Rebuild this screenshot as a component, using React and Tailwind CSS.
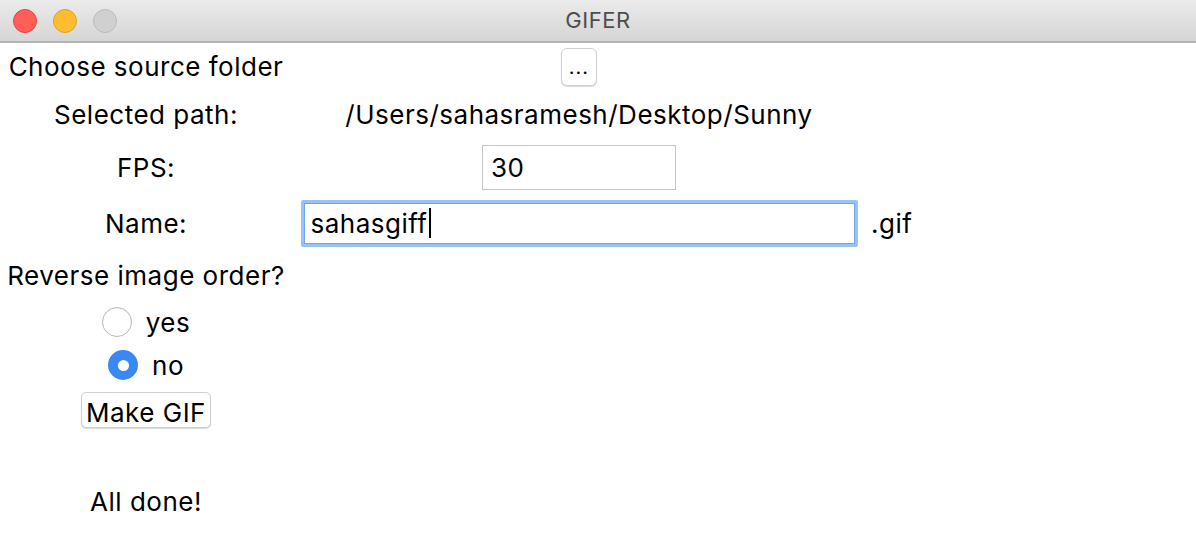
import { useState } from "react";

const TrafficLight = ({ className }) => (
    <div className={`w-[24px] h-[24px] rounded-full border ${className}`} />
);

const Cell = ({ children, className = "" }) => (
    <div className={`flex items-center justify-center ${className}`}>{children}</div>
);

const Radio = ({ checked }) =>
    checked ? (
        <div className="w-[30px] h-[30px] rounded-full bg-[#3b88f5] flex items-center justify-center">
            <div className="w-[11px] h-[11px] rounded-full bg-white" />
        </div>
    ) : (
        <div className="w-[30px] h-[30px] rounded-full border border-[#b8b8b8] bg-white shadow-[inset_0_1px_1px_rgba(0,0,0,0.05)]" />
    );

const App = () => {
    const [fps, setFps] = useState("30");
    const [name] = useState("sahasgiff");
    const [reverse, setReverse] = useState("no");

    return (
        <div className="w-[1196px] h-[543px] bg-white overflow-hidden text-[26px] tracking-[0.5px] text-black font-['Inter','Liberation_Sans',sans-serif]">
            {/* Title bar */}
            <div className="relative h-[43px] bg-gradient-to-b from-[#ebebeb] to-[#d5d5d5] border-b-2 border-[#b4b4b4] flex items-center">
                <div className="flex items-center gap-[16px] pl-[13px]">
                    <TrafficLight className="bg-[#fe5f57] border-[#e0443e]" />
                    <TrafficLight className="bg-[#febc2e] border-[#dea123]" />
                    <TrafficLight className="bg-[#d0d0d0] border-[#bcbcbc]" />
                </div>
                <div className="absolute inset-0 flex items-center justify-center text-[22px] tracking-[0.6px] text-[#4d4d4d]">
                    GIFER
                </div>
            </div>

            <div className="grid grid-cols-[292px_574px_80px] grid-rows-[47px_48px_58px_54px_50px_44px_42px_48px_44px_46px]">
                {/* Row 1 */}
                <Cell>Choose source folder</Cell>
                <Cell>
                    <button className="w-[36px] h-[38px] rounded-[6px] border border-[#d0d0d0] bg-white shadow-[0_1px_1px_rgba(0,0,0,0.15)] flex items-end justify-center pb-[8px] text-[20px] leading-none tracking-[1px]">
                        ...
                    </button>
                </Cell>
                <div />

                {/* Row 2 */}
                <Cell>Selected path:</Cell>
                <Cell>/Users/sahasramesh/Desktop/Sunny</Cell>
                <div />

                {/* Row 3 */}
                <Cell>FPS:</Cell>
                <Cell>
                    <input
                        value={fps}
                        onChange={(e) => setFps(e.target.value)}
                        className="w-[194px] h-[45px] border border-[#c4c4c4] px-[8px] outline-none"
                    />
                </Cell>
                <div />

                {/* Row 4 */}
                <Cell>Name:</Cell>
                <Cell>
                    <div className="w-[557px] h-[47px] border-[3px] border-[#9ac3f5] rounded-[2px] flex">
                        <div className="flex-1 border border-[#6fa6e8] flex items-center px-[6px]">
                            <span>{name}</span>
                            <span className="w-[2px] h-[30px] bg-black ml-[1px]" />
                        </div>
                    </div>
                </Cell>
                <div className="flex items-center pl-[5px]">.gif</div>

                {/* Row 5 */}
                <Cell>Reverse image order?</Cell>
                <div />
                <div />

                {/* Row 6 */}
                <Cell>
                    <div className="flex items-center gap-[14px] cursor-pointer" onClick={() => setReverse("yes")}>
                        <Radio checked={reverse === "yes"} />
                        <span>yes</span>
                    </div>
                </Cell>
                <div />
                <div />

                {/* Row 7 */}
                <Cell>
                    <div className="flex items-center gap-[14px] cursor-pointer" onClick={() => setReverse("no")}>
                        <Radio checked={reverse === "no"} />
                        <span>no</span>
                    </div>
                </Cell>
                <div />
                <div />

                {/* Row 8 */}
                <Cell>
                    <button className="w-[130px] h-[36px] rounded-[5px] border border-[#cfcfcf] bg-white shadow-[0_1px_1px_rgba(0,0,0,0.15)]">
                        Make GIF
                    </button>
                </Cell>
                <div />
                <div />

                {/* Row 9 */}
                <div />
                <div />
                <div />

                {/* Row 10 */}
                <Cell>All done!</Cell>
                <div />
                <div />
            </div>
        </div>
    );
};

export default App;
